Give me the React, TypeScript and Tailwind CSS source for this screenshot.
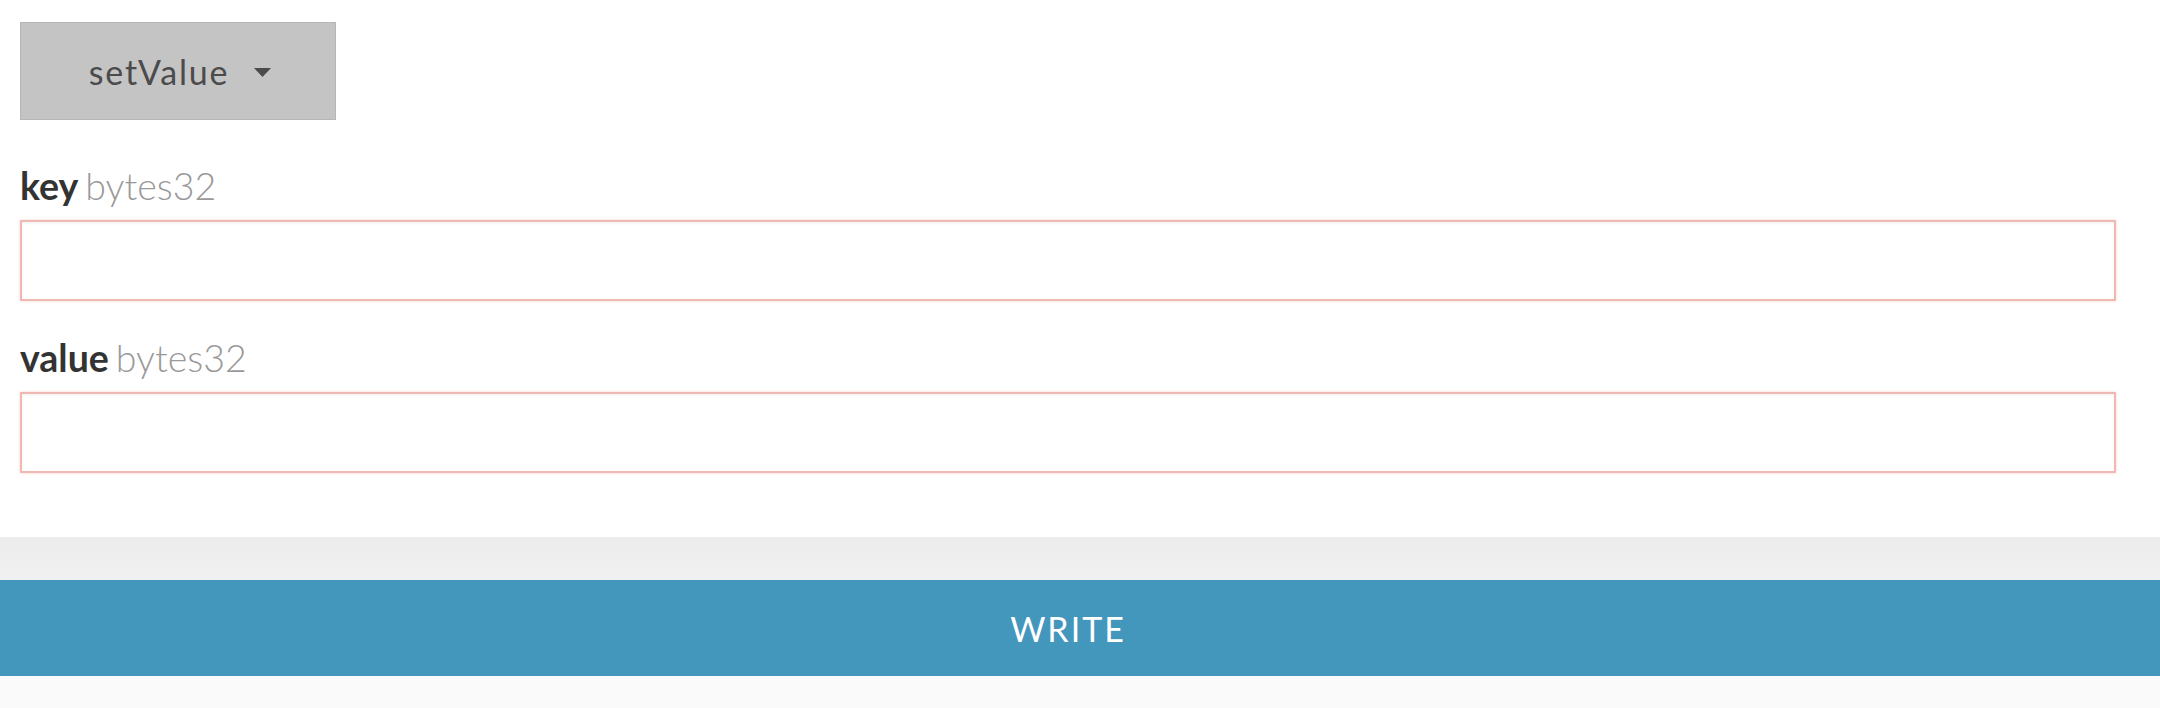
import React from "react";

function Field({ name }: { name: string }) {
  return (
    <div className="flex flex-col">
      <div className="h-[44px] flex items-end leading-none text-[37.5px]">
        <span className="font-bold text-[#333333]">{name}</span>
        <span className="ml-[7px] font-light text-[#999999]">bytes32</span>
      </div>
      <div className="mt-[16px] h-[81px] border-2 border-[#efb8b3] bg-white shadow-[0_0_3px_rgba(235,140,130,0.35),inset_0_2px_3px_rgba(0,0,0,0.04)]" />
    </div>
  );
}

export default function App() {
  return (
    <div className="w-[2160px] h-[708px] bg-white flex flex-col font-['Lato','Open_Sans',sans-serif]">
      <div className="pl-[20px] pr-[44px] pt-[22px] flex flex-col">
        <div className="w-[316px] h-[98px] bg-[#c4c4c4] border border-[#b6b6b6] flex items-center justify-center gap-[25px] text-[#4b4b4b]">
          <span className="text-[34px] tracking-[1.8px] ml-[4px]">setValue</span>
          <svg width="17" height="9" viewBox="0 0 17 9" className="mt-[3px]">
            <polygon points="0,0 17,0 8.5,9" fill="#4b4b4b" />
          </svg>
        </div>
        <div className="mt-[40px] flex flex-col gap-[31px]">
          <Field name="key" />
          <Field name="value" />
        </div>
      </div>
      <div className="mt-[64px] h-[43px] bg-gradient-to-b from-[#ececec] to-[#f1f1f1]" />
      <div className="h-[96px] bg-[#4396bc] flex items-center justify-center pr-[24px]">
        <span className="text-white text-[34px] tracking-[2px]">WRITE</span>
      </div>
      <div className="flex-1 bg-[#fafafa]" />
    </div>
  );
}
